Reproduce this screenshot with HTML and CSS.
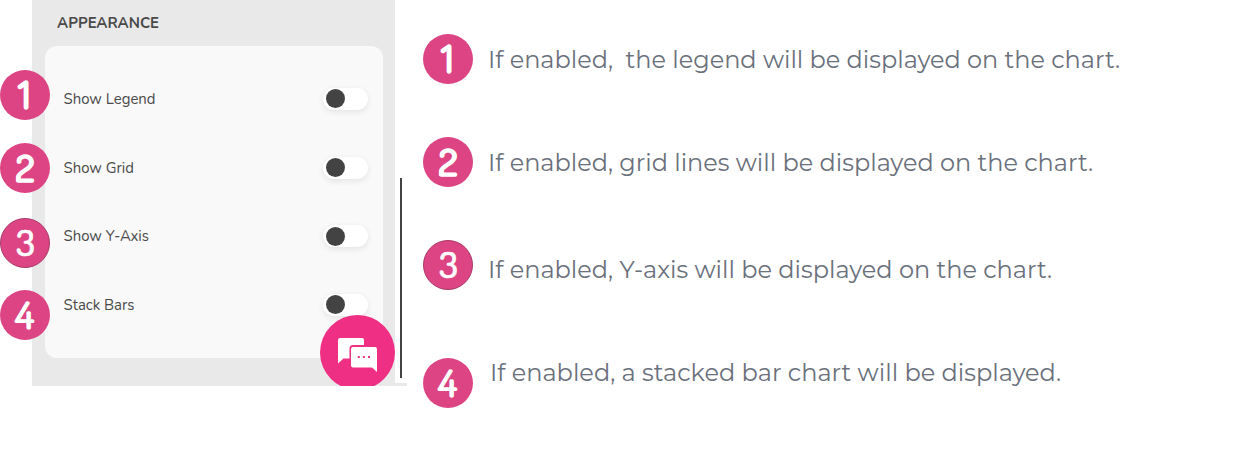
FILE: index.html
```html
<!DOCTYPE html>
<html lang="en">
<head>
<meta charset="utf-8">
<title>Appearance settings</title>
<link rel="stylesheet" href="styles.css">
</head>
<body>
<main class="page">
  <section class="preview">
    <div class="panel">
      <h2 class="panel-title"><svg class="line" width="110" height="22"><text x="0" y="16" textLength="102" lengthAdjust="spacingAndGlyphs">APPEARANCE</text></svg></h2>
      <div class="card">
        <div class="row"><svg class="line" width="110" height="22"><text x="0.5" y="16" textLength="92" lengthAdjust="spacingAndGlyphs">Show Legend</text></svg><span class="toggle"></span></div>
        <div class="row"><svg class="line" width="110" height="22"><text x="0.5" y="16" textLength="70.5" lengthAdjust="spacingAndGlyphs">Show Grid</text></svg><span class="toggle"></span></div>
        <div class="row"><svg class="line" width="110" height="22"><text x="0.5" y="16" textLength="85.5" lengthAdjust="spacingAndGlyphs">Show Y-Axis</text></svg><span class="toggle"></span></div>
        <div class="row"><svg class="line" width="110" height="22"><text x="0.5" y="16" textLength="71" lengthAdjust="spacingAndGlyphs">Stack Bars</text></svg><span class="toggle"></span></div>
      </div>
      <span class="chat">
        <svg width="75" height="75" viewBox="0 0 75 75">
          <path class="bubble" d="M20 23h22q2 0 2 2v5H33q-3.500 0-3.500 3.500V43.500H23.500L18 48.500V25q0-2 2-2z"/>
          <path class="bubble" d="M33 32h22q2 0 2 2v23l-5-4.500H33q-2 0-2-2V34q0-2 2-2z"/>
          <path class="dots" d="M37.800 41h2v2h-2zM42.900 41h2v2h-2zM48 41h2v2h-2z"/>
        </svg>
      </span>
    </div>
    <div class="scroll"><span class="thumb"></span><span class="track-end"></span></div>
    <svg class="badge pin pin-1" viewBox="0 0 50 50"><circle cx="25" cy="25" r="25"/><text class="one" x="17.5" y="38.500" textLength="14" lengthAdjust="spacingAndGlyphs">1</text></svg>
    <svg class="badge pin pin-2" viewBox="0 0 50 50"><circle cx="25" cy="25" r="25"/><text x="15.500" y="38.500" textLength="19" lengthAdjust="spacingAndGlyphs">2</text></svg>
    <svg class="badge ringed pin pin-3" viewBox="0 0 50 50"><circle cx="25" cy="25" r="24.500"/><text x="16" y="37.800" textLength="19" lengthAdjust="spacingAndGlyphs">3</text></svg>
    <svg class="badge pin pin-4" viewBox="0 0 50 50"><circle cx="25" cy="25" r="25"/><text class="four" x="15" y="38.500" textLength="19" lengthAdjust="spacingAndGlyphs">4</text></svg>
  </section>
  <section class="notes">
    <div class="note note-1"><svg class="badge" viewBox="0 0 50 50"><circle cx="25" cy="25" r="25"/><text class="one" x="17.5" y="38.500" textLength="14" lengthAdjust="spacingAndGlyphs">1</text></svg>
      <svg class="copy" width="700" height="36"><text x="0" y="26" textLength="632" lengthAdjust="spacingAndGlyphs">If enabled,&nbsp; the legend will be displayed on the chart.</text></svg></div>
    <div class="note note-2"><svg class="badge" viewBox="0 0 50 50"><circle cx="25" cy="25" r="25"/><text x="15.500" y="38.500" textLength="19" lengthAdjust="spacingAndGlyphs">2</text></svg>
      <svg class="copy" width="700" height="36"><text x="0" y="26" textLength="605" lengthAdjust="spacingAndGlyphs">If enabled, grid lines will be displayed on the chart.</text></svg></div>
    <div class="note note-3"><svg class="badge ringed" viewBox="0 0 50 50"><circle cx="25" cy="25" r="24.500"/><text x="16" y="37.800" textLength="19" lengthAdjust="spacingAndGlyphs">3</text></svg>
      <svg class="copy" width="700" height="36"><text x="0" y="26" textLength="564" lengthAdjust="spacingAndGlyphs">If enabled, Y-axis will be displayed on the chart.</text></svg></div>
    <div class="note note-4"><svg class="badge" viewBox="0 0 50 50"><circle cx="25" cy="25" r="25"/><text class="four" x="15" y="38.500" textLength="19" lengthAdjust="spacingAndGlyphs">4</text></svg>
      <svg class="copy" width="700" height="36"><text x="0" y="26" textLength="571" lengthAdjust="spacingAndGlyphs">If enabled, a stacked bar chart will be displayed.</text></svg></div>
  </section>
</main>
</body>
</html>
```
FILE: styles.css
```css
* { box-sizing: border-box; }
body { margin: 0; background: #fff; }
.page { display: flex; height: 472px; overflow: hidden; }
svg { display: block; flex: none; overflow: visible; }

.preview { position: relative; display: flex; width: 423px; height: 386px; padding-left: 32px; flex: none; }
.panel { position: relative; width: 363px; height: 386px; padding: 0 12px 0 13px; background: #e9e9e9; overflow: hidden; }
.panel-title { margin: 0; height: 46px; padding: 12px 0 0 12px; }
.line { font: 400 15px Nunito, "Open Sans", sans-serif; fill: #4a4a4a; }
.panel-title .line { font-weight: 700; font-size: 15px; }
.card { height: 312px; padding: 18.500px 15px 0 18px; border-radius: 12px; background: #f9f9f9; }
.row { display: flex; align-items: center; justify-content: space-between; height: 68.700px; }
.toggle { width: 45px; height: 22px; padding: 1.500px 3px; border-radius: 11px; background: #fff; box-shadow: 0 2px 6px rgba(0, 0, 0, .09); }
.toggle::before { content: ""; display: block; width: 19px; height: 19px; border-radius: 50%; background: #434343; }

.chat { position: absolute; left: 288px; top: 315px; width: 75px; height: 75px; border-radius: 50%; background: #ee2f84; }
.bubble { fill: #fff; }
.dots { fill: #ee2f84; }

.scroll { display: flex; flex-direction: column; width: 12px; height: 386px; padding-top: 178px; }
.thumb { width: 2px; height: 200px; margin-left: 5px; background: #434343; }
.track-end { height: 3px; margin-top: 5px; background: #e9e9e9; }

.badge { width: 50px; height: 50px; fill: #dc4484; }
.badge text { font: 500 38px Dosis, Nunito, sans-serif; fill: #fff; stroke: #fff; stroke-width: 1.400px; stroke-linejoin: round; }
.badge .one { font-size: 39px; font-family: Quicksand, Inter, sans-serif; stroke-width: 1.600px; }
.badge .four { font-weight: 400; }
.ringed circle { stroke: #a83c69; stroke-width: 1px; }
.badge.ringed text { font-size: 36px; stroke-width: .6px; }
.pin { position: absolute; left: 0; }
.pin-1 { top: 70px; }
.pin-2 { top: 143px; }
.pin-3 { top: 218px; }
.pin-4 { top: 290px; }

.notes { padding-top: 34px; }
.note { display: flex; gap: 15px; height: 50px; }
.copy { margin-top: 8px; font: 400 24px Montserrat, Inter, sans-serif; fill: #6a707c; }
.note-1, .note-2 { margin-bottom: 53px; }
.note-3 { margin-bottom: 68px; }
.note-3 .copy { margin-top: 12px; }
.note-4 { gap: 17px; }
.note-4 .copy { margin-top: -3px; }
```
